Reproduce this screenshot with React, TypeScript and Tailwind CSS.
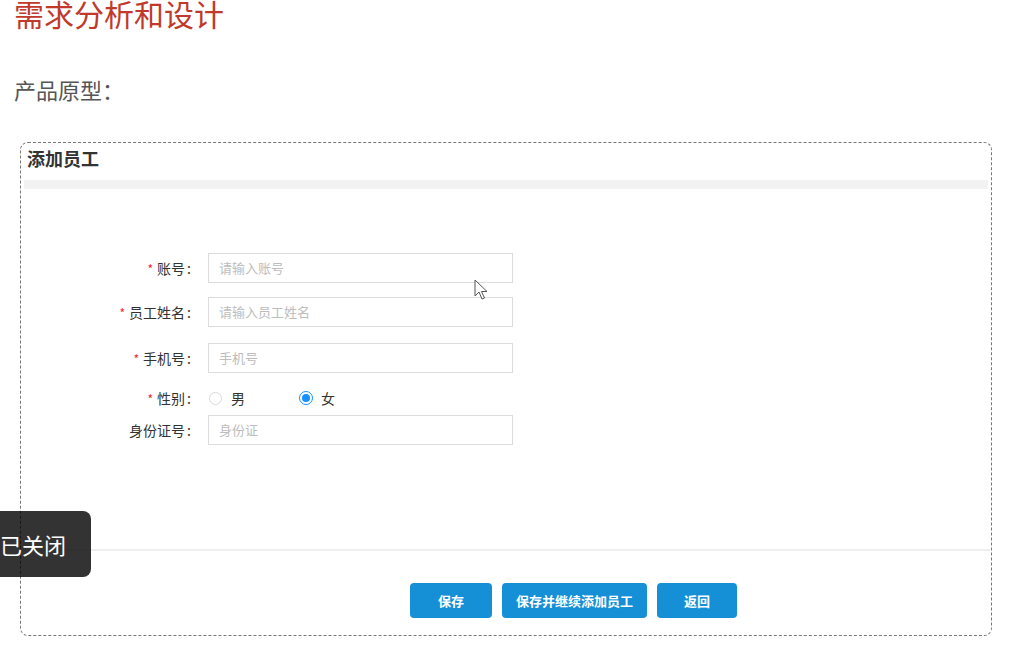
import React from "react"

const font = { fontFamily: '"Noto Sans CJK SC", "Noto Sans", sans-serif' }

function Field({
  label,
  required,
  placeholder,
  className,
}: {
  label: string
  required?: boolean
  placeholder: string
  className?: string
}) {
  return (
    <div className={`flex items-center h-[30px] ${className ?? ""}`}>
      <div className="w-[174px] pr-[4px] text-right text-[14px] text-[#333]">
        {required && <span className="text-[#f5222d] mr-[4px] text-[12px]">*</span>}
        {label}<span className="ml-[2px]">:</span>
      </div>
      <div className="ml-[13px] w-[305px] h-[30px] border border-[#dcdcdc] flex items-center px-[10px] text-[13px] text-[#bdbdbd]">
        {placeholder}
      </div>
    </div>
  )
}

export default function App() {
  return (
    <div className="relative w-[1034px] h-[647px] overflow-hidden bg-white" style={font}>
      {/* headings */}
      <div className="ml-[14px] mt-[-4px] text-[30px] leading-[34px] text-[#c0392b]">需求分析和设计</div>
      <div className="ml-[14px] mt-[44px] text-[22px] leading-[30px] text-[#555]">产品原型：</div>

      {/* prototype frame */}
      <div className="ml-[20px] mt-[38px] w-[972px] h-[494px] border border-dashed border-[#777] rounded-[8px] flex flex-col">
        <div className="px-[6px] pt-[3px] h-[37px] text-[18px] font-bold leading-[24px] text-[#333]">添加员工</div>
        <div className="mx-[3px] h-[9px] bg-[#f2f2f2]" />

        <div className="pt-[64px] flex flex-col">
          <Field required label="账号" placeholder="请输入账号" />
          <Field required label="员工姓名" placeholder="请输入员工姓名" className="mt-[14px]" />
          <Field required label="手机号" placeholder="手机号" className="mt-[16px]" />

          <div className="flex items-center h-[26px] mt-[12px]">
            <div className="w-[174px] pr-[4px] text-right text-[14px] text-[#333]">
              <span className="text-[#f5222d] mr-[4px] text-[12px]">*</span>性别<span className="ml-[2px]">:</span>
            </div>
            <div className="ml-[14px] flex items-center text-[14px] text-[#333]">
              <span className="w-[13px] h-[13px] rounded-full border border-[#d9d9d9] bg-white" />
              <span className="ml-[9px]">男</span>
              <span className="ml-[54px] w-[14px] h-[14px] rounded-full border border-[#1890ff] flex items-center justify-center">
                <span className="w-[8px] h-[8px] rounded-full bg-[#1890ff]" />
              </span>
              <span className="ml-[8px]">女</span>
            </div>
          </div>

          <Field label="身份证号" placeholder="身份证" className="mt-[4px]" />
        </div>

        <div className="mt-[104px] mx-[1px] h-[2px] bg-[#efefef]" />

        <div className="mt-[32px] flex gap-[10px] pl-[389px] text-[13px] font-bold text-white">
          <div className="w-[82px] h-[35px] rounded-[4px] bg-[#1590d6] flex items-center justify-center">保存</div>
          <div className="w-[145px] h-[35px] rounded-[4px] bg-[#1590d6] flex items-center justify-center">保存并继续添加员工</div>
          <div className="w-[80px] h-[35px] rounded-[4px] bg-[#1590d6] flex items-center justify-center">返回</div>
        </div>
      </div>

      {/* mouse cursor */}
      <svg className="absolute left-[474px] top-[279px]" width="14" height="22" viewBox="0 0 14 22">
        <path d="M1 1 L1 17 L5 13 L8 20 L10.5 19 L7.5 12.5 L13 12.5 Z" fill="white" stroke="#555" strokeWidth="1" strokeLinejoin="round" />
      </svg>

      {/* toast */}
      <div className="absolute left-0 top-[511px] w-[91px] h-[66px] rounded-r-[8px] bg-black/80 flex items-center text-white text-[22px]">
        已关闭
      </div>
    </div>
  )
}
